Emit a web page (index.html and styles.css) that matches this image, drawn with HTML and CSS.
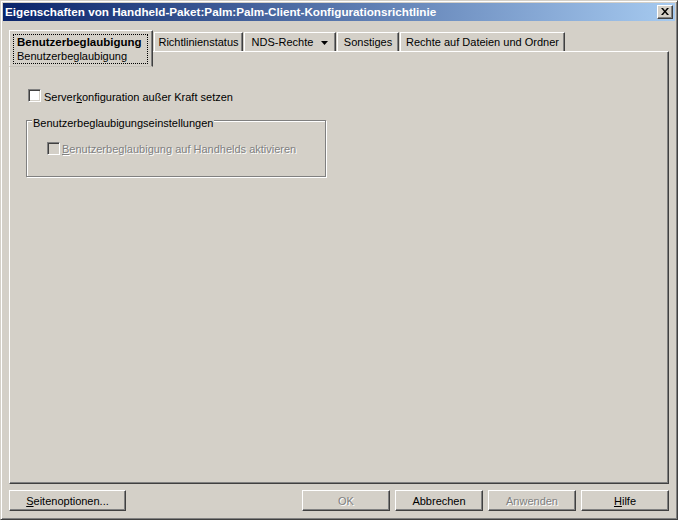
FILE: index.html
```html
<!DOCTYPE html>
<html lang="de">
<head>
<meta charset="utf-8">
<title>Eigenschaften</title>
<link rel="stylesheet" href="styles.css">
</head>
<body>
<div class="window">
  <div class="titlebar">
    <span class="title">Eigenschaften von Handheld-Paket:Palm:Palm-Client-Konfigurationsrichtlinie</span>
    <div class="close-btn">
      <svg width="8" height="7" viewBox="0 0 8 7"><path d="M0 0h2l2 2.5L6 0h2L5 3.5 8 7H6L4 4.5 2 7H0l3-3.5z" fill="#000"/></svg>
    </div>
  </div>
  <div class="content">
    <div class="tabs">
      <div class="tab tab-active">
        <div class="focus">
          <div class="tab-title">Benutzerbeglaubigung</div>
          <div class="tab-sub">Benutzerbeglaubigung</div>
        </div>
      </div>
      <div class="tab tab-richt">Richtlinienstatus</div>
      <div class="tab tab-nds">NDS-Rechte <svg class="arrow" width="7" height="4" viewBox="0 0 7 4"><path d="M0 0h7L3.5 4z" fill="#000"/></svg></div>
      <div class="tab tab-sonst">Sonstiges</div>
      <div class="tab tab-rechte">Rechte auf Dateien und Ordner</div>
    </div>
    <div class="panel">
      <div class="check-row row-main">
        <span class="checkbox"></span>
        <span class="label">Server<u>k</u>onfiguration außer Kraft setzen</span>
      </div>
      <div class="group">
        <div class="group-title">Benutzerbeglaubigungseinstellungen</div>
        <div class="check-row row-group disabled">
          <span class="checkbox"></span>
          <span class="label"><u>B</u>enutzerbeglaubigung auf Handhelds aktivieren</span>
        </div>
      </div>
    </div>
    <div class="buttons">
      <div class="btn btn-wide"><span><u>S</u>eitenoptionen...</span></div>
      <div class="spacer"></div>
      <div class="btn disabled"><span>OK</span></div>
      <div class="btn"><span>Abbrechen</span></div>
      <div class="btn disabled"><span>Anwenden</span></div>
      <div class="btn"><span><u>H</u>ilfe</span></div>
    </div>
  </div>
</div>
</body>
</html>
```
FILE: styles.css
```css
* { box-sizing: border-box; }
html, body { margin: 0; padding: 0; }
body {
  width: 678px;
  height: 520px;
  background: #D4D0C8;
  font-family: "Liberation Sans", Arial, sans-serif;
  font-size: 11px;
  color: #000;
}
.window {
  width: 678px;
  height: 520px;
  display: flex;
  flex-direction: column;
  background: #D4D0C8;
  border: 1px solid;
  border-color: #D4D0C8 #404040 #404040 #D4D0C8;
  box-shadow: inset 1px 1px 0 #FFFFFF, inset -1px -1px 0 #808080;
  padding: 2px;
}
.titlebar {
  height: 18px;
  flex: none;
  display: flex;
  align-items: center;
  justify-content: space-between;
  background: linear-gradient(to right, #0A246A, #A6CAF0);
  padding: 0 2px 0 2px;
}
.title {
  color: #fff;
  font-weight: bold;
  font-size: 11.7px;
  line-height: 18px;
  white-space: nowrap;
}
.close-btn {
  width: 16px;
  height: 14px;
  display: flex;
  align-items: center;
  justify-content: center;
  background: #D4D0C8;
  border: 1px solid;
  border-color: #FFFFFF #404040 #404040 #FFFFFF;
  box-shadow: inset -1px -1px 0 #808080;
  padding: 0 1px 1px 0;
}
.close-btn svg { display: block; }
.content {
  flex: 1;
  display: flex;
  flex-direction: column;
  padding: 9px 6px 6px 6px;
}
.tabs {
  height: 21px;
  flex: none;
  display: flex;
  align-items: flex-start;
  gap: 1px;
}
.tab {
  margin-top: 2px;
  height: 19px;
  background: #D4D0C8;
  border-top: 1px solid #FFFFFF;
  border-left: 1px solid #FFFFFF;
  border-right: 1px solid #404040;
  box-shadow: inset -1px 0 0 #808080;
  text-align: center;
  line-height: 14px;
  padding-top: 2px;
  white-space: nowrap;
}
.tab-active {
  margin-top: 0;
  height: 37px;
  width: 144px;
  position: relative;
  z-index: 2;
  padding: 3px 4px 3px 3px;
  text-align: left;
  border-bottom: 1px solid #C8C4BC;
}
.focus {
  border: 1px dotted #000;
  padding: 0 3px;
  height: 30px;
  line-height: 14px;
}
.tab-title { font-weight: bold; font-size: 11.5px; }
.tab-richt { width: 89px; }
.tab-nds { width: 92px; }
.tab-sonst { width: 62px; }
.tab-rechte { width: 165px; }
.arrow { margin-left: 5px; vertical-align: 1px; }
.panel {
  flex: 1;
  background: #D4D0C8;
  border-top: 1px solid #FFFFFF;
  border-left: 1px solid #FFFFFF;
  border-right: 1px solid #404040;
  border-bottom: 1px solid #404040;
  box-shadow: inset -1px -1px 0 #808080;
  padding: 0;
}
.check-row {
  display: flex;
  align-items: flex-start;
  line-height: 14px;
  height: 14px;
}
.row-main {
  margin: 37px 0 0 18px;
}
.row-main .label { margin-left: 3px; margin-top: 1px; }
.checkbox {
  width: 13px;
  height: 13px;
  flex: none;
  background: #FFFFFF;
  border: 1px solid;
  border-color: #808080 #FFFFFF #FFFFFF #808080;
  box-shadow: inset 1px 1px 0 #404040, inset -1px -1px 0 #D4D0C8;
}
.group {
  margin: 17px 0 0 16px;
  width: 300px;
  height: 57px;
  border: 1px solid #808080;
  box-shadow: 1px 1px 0 #FFFFFF, inset 1px 1px 0 #FFFFFF;
}
.group-title {
  display: block;
  width: fit-content;
  margin: -5px 0 0 5px;
  padding: 0 1px;
  line-height: 14px;
  height: 14px;
  background: #D4D0C8;
}
.row-group {
  margin: 12px 0 0 20px;
}
.disabled .checkbox { background: #D4D0C8; }
.row-group .label { margin-left: 2px; }
.disabled .label, .btn.disabled span {
  color: #808080;
  text-shadow: 1px 1px 0 #FFFFFF;
}
.buttons {
  flex: none;
  margin-top: 6px;
  height: 21px;
  display: flex;
  gap: 5px;
}
.spacer { flex: 1; }
.btn {
  width: 88px;
  height: 21px;
  display: flex;
  align-items: center;
  justify-content: center;
  background: #D4D0C8;
  border: 1px solid;
  border-color: #FFFFFF #404040 #404040 #FFFFFF;
  box-shadow: inset -1px -1px 0 #808080;
  line-height: 14px;
  padding-top: 1px;
  white-space: nowrap;
}
.btn-wide { width: 117px; }
```
